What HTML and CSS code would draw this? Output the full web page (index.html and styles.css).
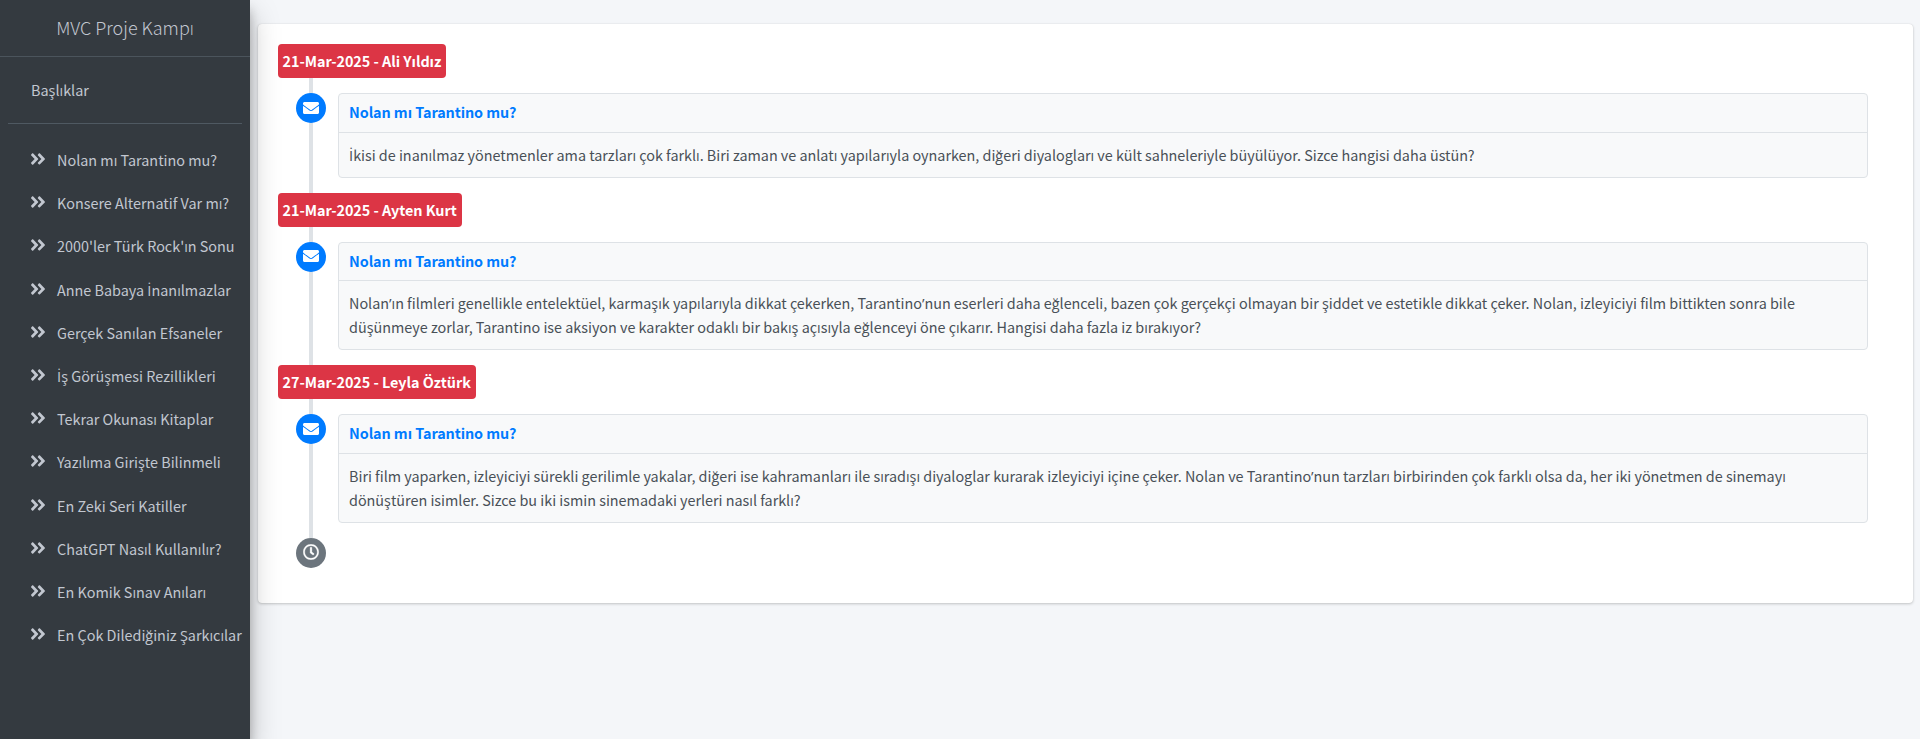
FILE: index.html
```html
<!DOCTYPE html>
<html lang="tr">
<head>
<meta charset="utf-8">
<title>MVC Proje Kampı</title>
<link rel="stylesheet" href="styles.css">
</head>
<body>
<svg width="0" height="0" class="sprite">
  <symbol id="chevrons" viewBox="0 0 448 512"><path d="M224.3 273l-136 136c-9.4 9.4-24.600 9.400-33.900 0l-22.600-22.600c-9.400-9.400-9.400-24.600 0-33.900l96.400-96.400-96.400-96.400c-9.400-9.400-9.400-24.600 0-33.900L54.300 103c9.400-9.400 24.600-9.400 33.900 0l136 136c9.500 9.400 9.500 24.600.1 34zm192-34l-136-136c-9.400-9.400-24.600-9.400-33.900 0l-22.600 22.600c-9.400 9.400-9.400 24.600 0 33.900l96.400 96.400-96.400 96.400c-9.400 9.400-9.400 24.600 0 33.900l22.600 22.600c9.400 9.400 24.600 9.400 33.900 0l136-136c9.400-9.200 9.400-24.400 0-33.800z"/></symbol>
  <symbol id="envelope" viewBox="0 0 512 512"><path d="M502.300 190.800c3.900-3.100 9.700-.2 9.700 4.700V400c0 26.500-21.500 48-48 48H48c-26.500 0-48-21.500-48-48V195.600c0-5 5.700-7.800 9.700-4.700 22.400 17.400 52.100 39.500 154.100 113.600 21.100 15.400 56.700 47.800 92.200 47.600 35.700.3 72-32.800 92.300-47.600 102-74.100 131.600-96.300 154-113.700zM256 320c23.200.4 56.600-29.200 73.400-41.400 132.700-96.300 142.800-104.700 173.400-128.700 5.800-4.500 9.200-11.500 9.200-18.900v-19c0-26.500-21.500-48-48-48H48c-26.500 0-48 21.500-48 48v19c0 7.400 3.400 14.300 9.200 18.900 30.600 23.900 40.700 32.400 173.400 128.700 16.800 12.200 50.200 41.800 73.400 41.400z"/></symbol>
  <symbol id="clock" viewBox="0 0 512 512"><path d="M256 8C119 8 8 119 8 256s111 248 248 248 248-111 248-248S393 8 256 8zm0 448c-110.500 0-200-89.500-200-200S145.500 56 256 56s200 89.500 200 200-89.500 200-200 200zm61.800-104.400l-84.900-61.700c-3.100-2.300-4.900-5.900-4.900-9.700V116c0-6.600 5.400-12 12-12h32c6.600 0 12 5.400 12 12v141.700l66.800 48.600c5.400 3.900 6.500 11.400 2.600 16.800L334.600 349c-3.900 5.300-11.400 6.500-16.800 2.600z"/></symbol>
</svg>
<div class="wrapper">
  <aside class="sidebar">
    <div class="brand"><span>MVC Proje Kampı</span></div>
    <div class="panel"><span>Başlıklar</span></div>
    <nav class="nav">
      <a class="nav-item"><svg><use href="#chevrons"/></svg><span>Nolan mı Tarantino mu?</span></a>
      <a class="nav-item"><svg><use href="#chevrons"/></svg><span>Konsere Alternatif Var mı?</span></a>
      <a class="nav-item"><svg><use href="#chevrons"/></svg><span>2000'ler Türk Rock'ın Sonu</span></a>
      <a class="nav-item"><svg><use href="#chevrons"/></svg><span>Anne Babaya <span class="alt">İ</span>nanılmazlar</span></a>
      <a class="nav-item"><svg><use href="#chevrons"/></svg><span>Gerçek Sanılan Efsaneler</span></a>
      <a class="nav-item"><svg><use href="#chevrons"/></svg><span><span class="alt">İ</span>ş Görüşmesi Rezillikleri</span></a>
      <a class="nav-item"><svg><use href="#chevrons"/></svg><span>Tekrar Okunası Kitaplar</span></a>
      <a class="nav-item"><svg><use href="#chevrons"/></svg><span>Yazılıma Girişte Bilinmeli</span></a>
      <a class="nav-item"><svg><use href="#chevrons"/></svg><span>En Zeki Seri Katiller</span></a>
      <a class="nav-item"><svg><use href="#chevrons"/></svg><span>ChatGPT Nasıl Kullanılır?</span></a>
      <a class="nav-item"><svg><use href="#chevrons"/></svg><span>En Komik Sınav Anıları</span></a>
      <a class="nav-item"><svg><use href="#chevrons"/></svg><span>En Çok Dilediğiniz Şarkıcılar</span></a>
    </nav>
  </aside>
  <main class="content">
    <section class="card">
      <div class="timeline">
        <div class="time-label label-1">21-Mar-2025 - Ali Yıldız</div>
        <article class="entry">
          <div class="dot"><svg><use href="#envelope"/></svg></div>
          <div class="item">
            <h3>Nolan mı Tarantino mu?</h3>
            <p><span class="alt">İ</span>kisi de inanılmaz yönetmenler ama tarzları çok farklı. Biri zaman ve anlatı yapılarıyla oynarken, diğeri diyalogları ve kült sahneleriyle büyülüyor. Sizce hangisi daha üstün?</p>
          </div>
        </article>
        <div class="time-label label-2">21-Mar-2025 - Ayten Kurt</div>
        <article class="entry">
          <div class="dot"><svg><use href="#envelope"/></svg></div>
          <div class="item">
            <h3>Nolan mı Tarantino mu?</h3>
            <p>Nolan<span class="alt">’</span>ın filmleri genellikle entelektüel, karmaşık yapılarıyla dikkat çekerken, Tarantino<span class="alt">’</span>nun eserleri daha eğlenceli, bazen çok gerçekçi olmayan bir şiddet ve estetikle dikkat çeker. Nolan, izleyiciyi film bittikten sonra bile<br>düşünmeye zorlar, Tarantino ise aksiyon ve karakter odaklı bir bakış açısıyla eğlenceyi öne çıkarır. Hangisi daha fazla iz bırakıyor?</p>
          </div>
        </article>
        <div class="time-label label-3">27-Mar-2025 - Leyla Öztürk</div>
        <article class="entry">
          <div class="dot"><svg><use href="#envelope"/></svg></div>
          <div class="item">
            <h3>Nolan mı Tarantino mu?</h3>
            <p>Biri film yaparken, izleyiciyi sürekli gerilimle yakalar, diğeri ise kahramanları ile sıradışı diyaloglar kurarak izleyiciyi içine çeker. Nolan ve Tarantino<span class="alt">’</span>nun tarzları birbirinden çok farklı olsa da, her iki yönetmen de sinemayı<br>dönüştüren isimler. Sizce bu iki ismin sinemadaki yerleri nasıl farklı?</p>
          </div>
        </article>
        <div class="dot dot-end"><svg><use href="#clock"/></svg></div>
      </div>
    </section>
  </main>
</div>
</body>
</html>
```
FILE: styles.css
```css
* { box-sizing: border-box; }
body {
  margin: 0;
  background: #f4f6f9;
  color: #495057;
  font: 400 14.4px/24px "Noto Sans CJK SC", "Open Sans", sans-serif;
}
/* Dotted capital I and the narrow apostrophe come from a Latin face */
.alt { font-family: "Open Sans", sans-serif; font-size: 14.8px; line-height: 1; }
.sprite { position: absolute; }
.wrapper { display: flex; height: 739px; overflow: hidden; }

.sidebar {
  position: relative;
  z-index: 1;
  flex: 0 0 250px;
  background: #343a40;
  color: #c2c7d0;
  box-shadow: 0 14px 28px rgba(0,0,0,.25), 0 10px 10px rgba(0,0,0,.22);
}
.brand {
  height: 57px;
  border-bottom: 1px solid #4b545c;
  text-align: center;
  font-size: 18px;
  font-weight: 300;
  line-height: 54px;
}
.panel {
  height: 67px;
  margin: 0 8px;
  padding-left: 23px;
  border-bottom: 1px solid #4f5962;
  line-height: 65px;
}
.nav { margin: 16px 8px 0; }
.nav-item {
  display: flex;
  align-items: center;
  height: 40px;
  margin-bottom: 3.2px;
  padding-left: 22px;
  white-space: nowrap;
}
.nav-item svg { width: 16px; height: 18px; margin: -2px 11px 0 0; fill: currentColor; flex: none; }

.content { flex: 1; padding: 24px 7px 0 8px; }
.card {
  height: 579px;
  padding: 20px;
  background: #fff;
  border-radius: 4px;
  box-shadow: 0 0 1px rgba(0,0,0,.125), 0 1px 3px rgba(0,0,0,.2);
}
.timeline {
  display: flex;
  flex-direction: column;
  align-items: flex-start;
  gap: 15px;
  background: linear-gradient(#dee2e6, #dee2e6) 31px 0 / 4px 494px no-repeat;
}
.time-label {
  height: 34px;
  padding: 0 4.5px;
  border-radius: 4px;
  background: #dc3545;
  color: #fff;
  font-weight: 700;
  letter-spacing: -.04px;
  line-height: 34px;
  white-space: nowrap;
}
.label-1 { width: 168px; }
.label-2 { width: 184px; }
.label-3 { width: 198px; }
.entry { display: flex; align-self: stretch; gap: 12px; padding: 0 25px 0 18px; }
.dot {
  display: flex;
  align-items: center;
  justify-content: center;
  flex: none;
  width: 30px;
  height: 30px;
  border-radius: 50%;
  background: #007bff;
}
.dot svg { width: 16px; height: 16px; margin: -1px 1px 0 0; fill: #fff; }
.dot-end { margin-left: 18px; background: #6c757d; }
.dot-end svg { stroke: #fff; stroke-width: 10px; }
.item {
  flex: 1;
  border: 1px solid #dee2e6;
  border-radius: 4px;
  background: #f8f9fa;
}
.item h3 {
  margin: 0;
  padding: 9px 10px 11px;
  border-bottom: 1px solid #dee2e6;
  color: #007bff;
  font-size: 14.4px;
  font-weight: 700;
  letter-spacing: -.08px;
  line-height: 17.6px;
}
.item p { margin: 0; padding: 10px; letter-spacing: -.016px; white-space: nowrap; }
```
